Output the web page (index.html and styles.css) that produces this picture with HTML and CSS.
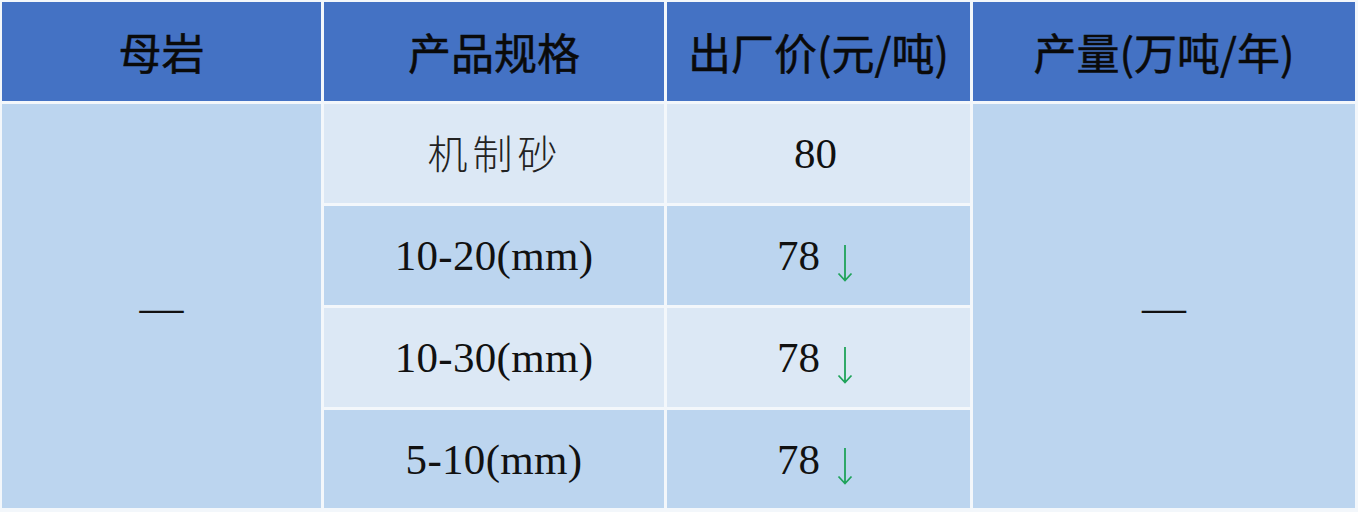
FILE: index.html
```html
<!DOCTYPE html>
<html lang="zh">
<head>
<meta charset="utf-8">
<link rel="stylesheet" href="styles.css">
</head>
<body>
<div class="table">
  <div class="th">母岩</div>
  <div class="th">产品规格</div>
  <div class="th">出厂价(元/吨)</div>
  <div class="th">产量(万吨/年)</div>

  <div class="td merged col1"><span class="dash">—</span></div>
  <div class="td light spec cjk">机制砂</div>
  <div class="td light num">80</div>
  <div class="td merged col4"><span class="dash">—</span></div>

  <div class="td dark spec">10-20(mm)</div>
  <div class="td dark num">78<svg class="arrow" viewBox="0 0 18 38" width="18" height="38"><path d="M9 1V36M2.5 29.5L9 36.5L15.5 29.5"/></svg></div>

  <div class="td light spec">10-30(mm)</div>
  <div class="td light num">78<svg class="arrow" viewBox="0 0 18 38" width="18" height="38"><path d="M9 1V36M2.5 29.5L9 36.5L15.5 29.5"/></svg></div>

  <div class="td dark spec">5-10(mm)</div>
  <div class="td dark num">78<svg class="arrow" viewBox="0 0 18 38" width="18" height="38"><path d="M9 1V36M2.5 29.5L9 36.5L15.5 29.5"/></svg></div>
</div>
</body>
</html>
```
FILE: styles.css
```css
html, body {
  margin: 0;
  padding: 0;
  background: #ffffff;
}

.table {
  width: 1358px;
  height: 512px;
  box-sizing: border-box;
  padding: 2px 3px 4px 2px;
  background: #f3f7fb;
  display: grid;
  grid-template-columns: 319px 340px 303px 1fr;
  grid-template-rows: 99px 99px 99px 99px 1fr;
  gap: 3px;
}

.th {
  background: #4472c4;
  color: #0a0a0a;
  font-family: "Noto Sans CJK SC", "Noto Sans", sans-serif;
  font-size: 43px;
  font-weight: 400;
  -webkit-text-stroke: 0.5px #0a0a0a;
  display: flex;
  align-items: center;
  justify-content: center;
  padding-bottom: 2px;
}

.td {
  display: flex;
  align-items: center;
  justify-content: center;
  color: #111;
  font-family: "Liberation Serif", "Noto Sans CJK SC", serif;
  font-size: 43px;
}

.merged {
  background: #bcd5ef;
  grid-row: 2 / span 4;
}

.col1 { grid-column: 1; }
.col4 { grid-column: 4; }

.light { background: #dce8f5; }
.dark { background: #bcd5ef; }

.spec { letter-spacing: 0.3px; }

.cjk {
  font-family: "Noto Sans CJK SC", sans-serif;
  font-weight: 300;
  font-size: 40px;
  letter-spacing: 5px;
  color: #222;
  padding-left: 2px;
  padding-bottom: 4px;
}

.num {
  padding-right: 6px;
}

.dash {
  font-size: 44px;
  padding-top: 2px;
}

.arrow {
  margin-left: 16px;
  margin-top: 14px;
  fill: none;
  stroke: #1fa35a;
  stroke-width: 1.8;
}
```
